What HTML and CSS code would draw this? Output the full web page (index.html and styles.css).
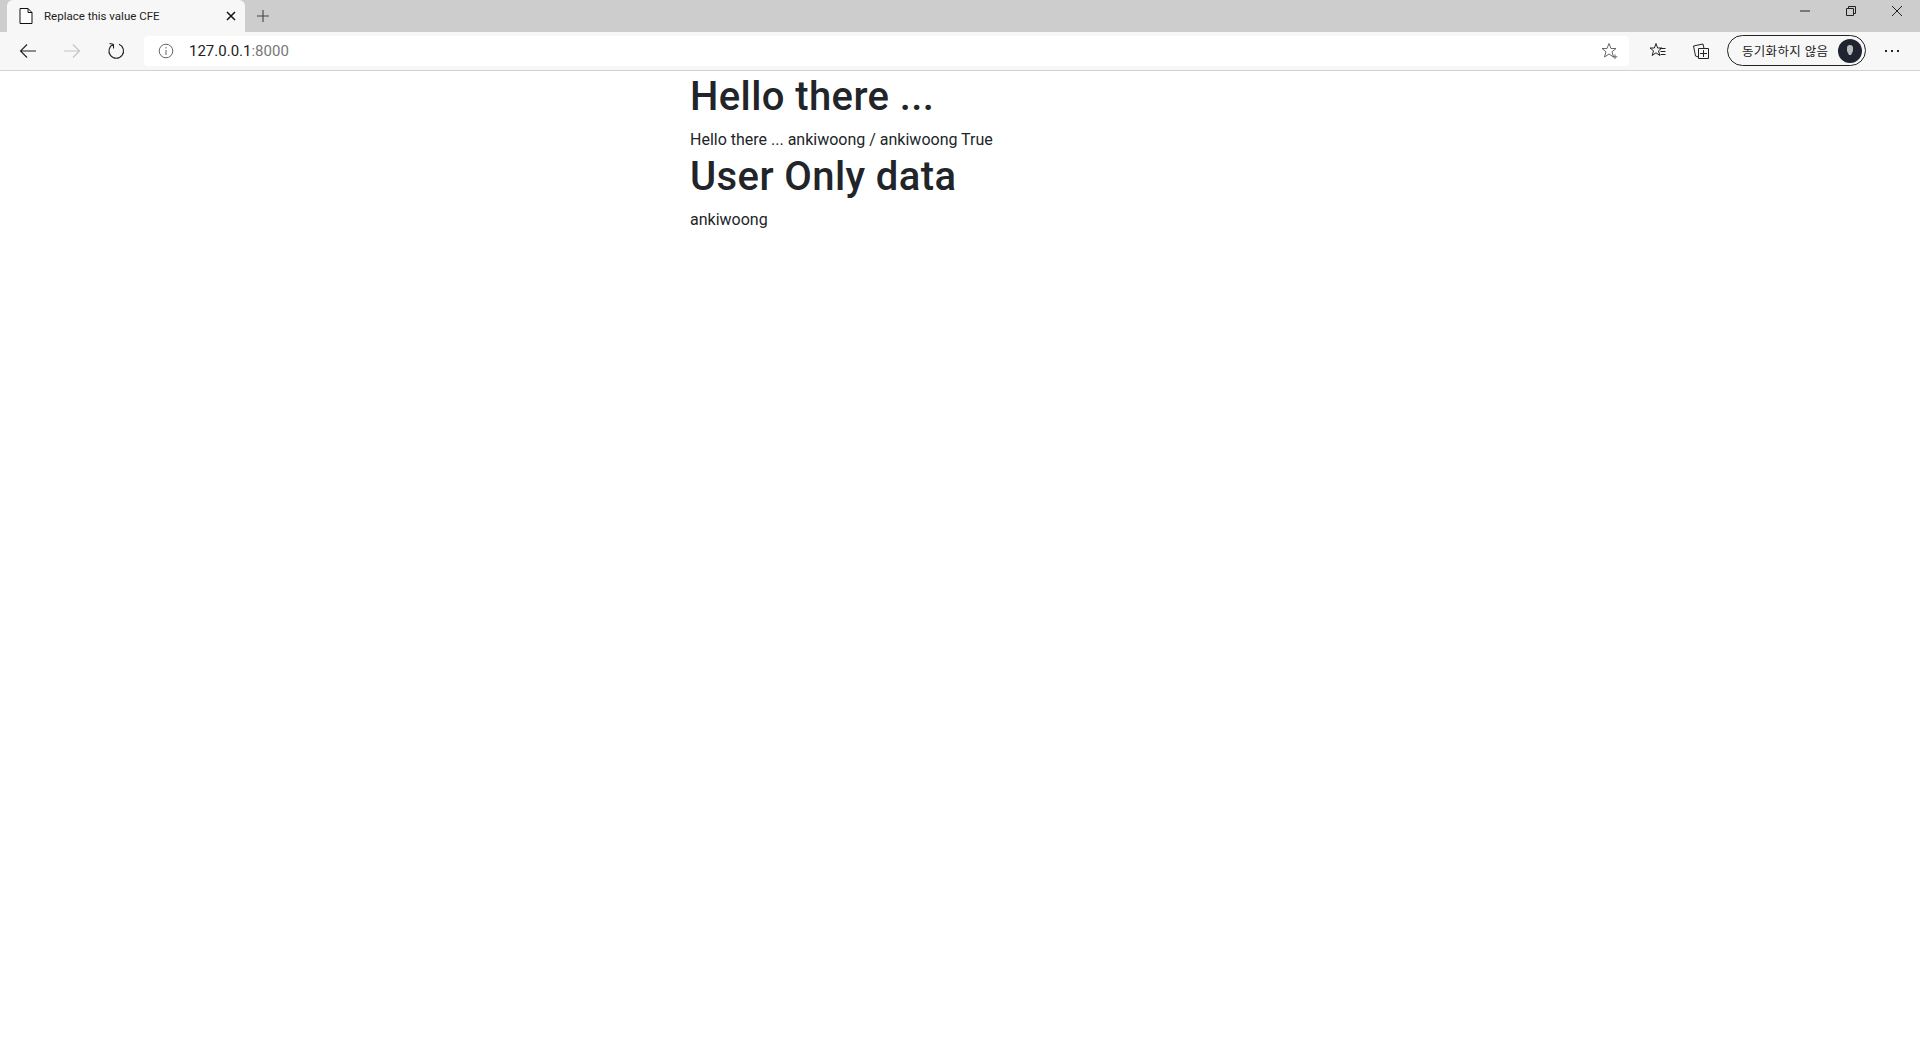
FILE: index.html
```html
<!DOCTYPE html>
<html lang="ko">
<head>
<meta charset="utf-8">
<title>Replace this value CFE</title>
<link rel="stylesheet" href="styles.css">
</head>
<body>
<header class="chrome">
  <div class="tabstrip">
    <div class="tab">
      <svg class="tab-doc" width="14" height="16" viewBox="0 0 14 16"><path d="M1 .5h8l4 4v11H1zM9 .5v4h4" fill="#fff" stroke="#111" stroke-width="1"/></svg>
      <span class="tab-title">Replace this value CFE</span>
      <svg class="tab-close" width="10" height="10" viewBox="0 0 10 10"><path d="M1 1l8 8M9 1l-8 8" stroke="#111" stroke-width="1.500" fill="none"/></svg>
    </div>
    <svg class="new-tab" width="14" height="14" viewBox="0 0 14 14"><path d="M7 1v12M1 7h12" stroke="#444" stroke-width="1.100" fill="none"/></svg>
    <div class="win-controls">
      <svg width="12" height="12" viewBox="0 0 12 12"><path d="M1 6h10" stroke="#222" fill="none"/></svg>
      <svg width="12" height="12" viewBox="0 0 12 12"><path d="M1.500 3.500h7v7h-7zM3.500 3.500v-2h7v7h-2" stroke="#222" fill="none"/></svg>
      <svg width="12" height="12" viewBox="0 0 12 12"><path d="M1 1l10 10M11 1l-10 10" stroke="#222" fill="none"/></svg>
    </div>
  </div>
  <div class="toolbar">
    <svg class="nav" width="18" height="16" viewBox="0 0 18 16"><path d="M17 8H1.500M8 1.500L1.500 8 8 14.500" stroke="#222" stroke-width="1.100" fill="none"/></svg>
    <svg class="nav" width="18" height="16" viewBox="0 0 18 16"><path d="M1 8h15.500M10 1.500L16.500 8 10 14.500" stroke="#c4c4c4" stroke-width="1.100" fill="none"/></svg>
    <svg class="nav" width="18" height="18" viewBox="0 0 18 18"><path d="M6.500 2.200A7.300 7.300 0 1 0 12 2.200M6.500 2.200V6.500M6.500 2.200L2.500 1.500" stroke="#222" stroke-width="1.100" fill="none"/></svg>
    <div class="address">
      <svg class="info" width="16" height="16" viewBox="0 0 16 16"><circle cx="8" cy="8" r="6.800" stroke="#666" fill="none"/><path d="M8 7v5M8 4v1.500" stroke="#666" fill="none"/></svg>
      <span class="url">127.0.0.1<span class="port">:8000</span></span>
      <svg class="star" width="18" height="18" viewBox="0 0 18 18"><path d="M8 1.500l2 5h5l-4 3.300 1.500 5.200L8 12l-4.500 3L5 9.800 1 6.500h5zM14 12.500v4.500M11.700 14.800h4.600" stroke="#666" fill="none"/></svg>
    </div>
    <svg class="tool" width="18" height="18" viewBox="0 0 18 18"><path d="M7 1.500l1.600 4.500h4.400l-3.500 2.800 1.300 4.700L7 10.800l-3.800 2.700L4.500 8.800 1 6h4.400zM11 6.500h5.500M11.500 9.500h5M11.500 12.500h5" stroke="#222" fill="none"/></svg>
    <svg class="tool" width="18" height="18" viewBox="0 0 18 18"><path d="M6.500 16.500h10v-10h-10zM11.500 8v7M8 11.500h7M6.500 15L3.500 14 1.500 4 11 2l1 4.500" stroke="#222" fill="none"/></svg>
    <div class="sync">
      <span class="sync-label">동기화하지 않음</span>
      <span class="avatar"><svg width="10" height="12" viewBox="0 0 10 12"><path d="M2 3a3 3 0 0 1 6 0v3L6 10H4L2 6z" fill="#bbb"/></svg></span>
    </div>
    <div class="more"><i></i><i></i><i></i></div>
  </div>
</header>
<main class="content">
  <h1>Hello there ...</h1>
  <p>Hello there ... ankiwoong / ankiwoong True</p>
  <h1>User Only data</h1>
  <p>ankiwoong</p>
</main>
</body>
</html>
```
FILE: styles.css
```css
* { box-sizing: border-box; }
html, body { margin: 0; height: 100%; background: #fff; }
body { font-family: Roboto, "Open Sans", sans-serif; color: #212529; overflow: hidden; }
svg { display: block; flex: none; }

.chrome { height: 71px; display: flex; flex-direction: column; }
.tabstrip { height: 32px; background: #cdcdcd; display: flex; align-items: center; padding-left: 7px; }
.tab { width: 238px; height: 32px; background: #f7f7f7; border-radius: 6px 6px 0 0; display: flex; align-items: center; padding: 0 9px 0 12px; }
.tab-title { font-size: 11.500px; color: #222; margin-left: 11px; flex: 1; white-space: nowrap; }
.new-tab { margin-left: 11px; }
.win-controls { margin-left: auto; display: flex; gap: 34px; padding: 0 17px 10px 0; align-items: center; }

.toolbar { height: 39px; background: #f7f7f7; border-bottom: 1px solid #d2d2d2; display: flex; align-items: center; padding: 0 0 1px 19px; }
.nav { margin-right: 26px; }
.toolbar .nav:nth-child(3) { margin-right: 19px; }
.address { width: 1485px; height: 30px; background: #fff; border-radius: 4px; display: flex; align-items: center; padding: 0 10px 0 14px; }
.url { font-size: 15px; color: #222; margin-left: 15px; flex: 1; }
.port { color: #777; }
.tool { margin-left: 25px; }
.address + .tool { margin-left: 20px; }
.sync { width: 139px; height: 31px; margin-left: 17px; border: 1px solid #222; border-radius: 16px; display: flex; align-items: center; justify-content: space-between; padding: 0 3px 0 14px; background: #f7f7f7; }
.sync-label { font-family: "Noto Sans CJK KR", "Noto Sans", sans-serif; font-size: 12.500px; letter-spacing: .3px; color: #222; white-space: nowrap; }
.avatar { width: 24px; height: 24px; border-radius: 50%; background: #1f2430; display: flex; align-items: center; justify-content: center; }
.more { display: flex; gap: 4px; margin-left: 19px; }
.more i { width: 2px; height: 2px; background: #222; display: block; }

.content { width: 540px; margin: 0 auto; padding-top: 1px; }
h1 { font-size: 40px; font-weight: 500; line-height: 50px; letter-spacing: .4px; margin: 0 0 6px; }
p { font-size: 16px; line-height: 24px; margin: 0; }
```
